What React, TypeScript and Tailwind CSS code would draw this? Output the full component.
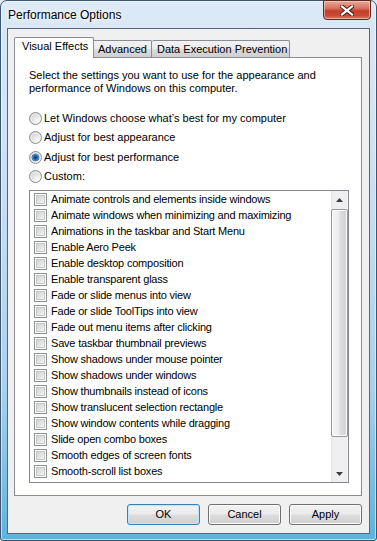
const effects = [
  'Animate controls and elements inside windows',
  'Animate windows when minimizing and maximizing',
  'Animations in the taskbar and Start Menu',
  'Enable Aero Peek',
  'Enable desktop composition',
  'Enable transparent glass',
  'Fade or slide menus into view',
  'Fade or slide ToolTips into view',
  'Fade out menu items after clicking',
  'Save taskbar thumbnail previews',
  'Show shadows under mouse pointer',
  'Show shadows under windows',
  'Show thumbnails instead of icons',
  'Show translucent selection rectangle',
  'Show window contents while dragging',
  'Slide open combo boxes',
  'Smooth edges of screen fonts',
  'Smooth-scroll list boxes',
];

const radios = [
  { label: 'Let Windows choose what\u2019s best for my computer', h: 'h-[20px]' },
  { label: 'Adjust for best appearance', h: 'h-[19px]' },
  { label: 'Adjust for best performance', h: 'h-[20px]', checked: true },
  { label: 'Custom:', h: 'h-[19px]' },
];

function Radio({ checked = false }: { checked?: boolean }) {
  return (
    <svg width="13" height="13" viewBox="0 0 13 13" className="shrink-0">
      <defs>
        <radialGradient id="rg-off" cx="0.65" cy="0.7" r="0.7">
          <stop offset="0" stopColor="#fbfbfb" />
          <stop offset="1" stopColor="#cfd0d1" />
        </radialGradient>
        <radialGradient id="rg-on" cx="0.5" cy="0.5" r="0.5">
          <stop offset="0" stopColor="#0a3566" />
          <stop offset="0.55" stopColor="#1c64b0" />
          <stop offset="1" stopColor="#74b8ec" />
        </radialGradient>
      </defs>
      <circle cx="6.5" cy="6.5" r="6" fill="url(#rg-off)" stroke="#8c8e91" />
      <circle cx="6.5" cy="6.5" r="4.6" fill="none" stroke="#ffffff" strokeOpacity="0.6" />
      {checked && <circle cx="6.5" cy="6.5" r="3.6" fill="url(#rg-on)" stroke="#27578c" strokeWidth="0.6" />}
    </svg>
  );
}

function CheckBox() {
  return (
    <svg width="13" height="13" viewBox="0 0 13 13" className="shrink-0">
      <defs>
        <linearGradient id="cb-in" x1="0" y1="0" x2="1" y2="1">
          <stop offset="0" stopColor="#cdd0d4" />
          <stop offset="1" stopColor="#f6f6f6" />
        </linearGradient>
      </defs>
      <rect x="0.5" y="0.5" width="12" height="12" fill="#ffffff" stroke="#8e8f8f" />
      <rect x="2.5" y="2.5" width="8" height="8" fill="url(#cb-in)" stroke="#b9bcc0" strokeWidth="0.8" />
    </svg>
  );
}

function Arrow({ up }: { up?: boolean }) {
  return (
    <svg width="7" height="4" viewBox="0 0 7 4">
      <path d={up ? 'M0 4 L3.5 0 L7 4 Z' : 'M0 0 L3.5 4 L7 0 Z'} fill="#3d3d3d" />
    </svg>
  );
}

function Button({ label, primary = false }: { label: string; primary?: boolean }) {
  return (
    <button
      className={
        primary
          ? 'flex h-[21px] w-[73px] items-center justify-center rounded-[3px] border border-[#3c7fb1] bg-[linear-gradient(180deg,#f2f2f2_0%,#ebebeb_48%,#dddddd_52%,#cfcfcf_100%)] pb-px text-[11px] text-black shadow-[inset_0_0_0_1px_#c4e5f6]'
          : 'flex h-[21px] w-[73px] items-center justify-center rounded-[3px] border border-[#707070] bg-[linear-gradient(180deg,#f2f2f2_0%,#ebebeb_48%,#dddddd_52%,#cfcfcf_100%)] pb-px text-[11px] text-black shadow-[inset_0_0_0_1px_#fcfcfc]'
      }
    >
      {label}
    </button>
  );
}

export default function App() {
  return (
    <div className="h-[541px] w-[377px] overflow-hidden bg-[#dde9f5] font-['Liberation_Sans',Arial,sans-serif]">
      <div className="relative flex h-[541px] w-[377px] flex-col rounded-t-[7px] rounded-b-[3px] border border-[#3a5670] bg-[linear-gradient(180deg,#dce9f6_0%,#cde0f3_30%,#a9d0ec_72%,#5db3de_100%)] shadow-[inset_0_0_0_1px_rgba(255,255,255,0.55)]">
        {/* title bar */}
        <div className="flex h-[27px] shrink-0 items-start pl-[7px] pt-[7px]">
          <span className="text-[12px] leading-[14px] text-black [text-shadow:0_0_8px_#ffffff,0_0_4px_#ffffff]">
            Performance Options
          </span>
        </div>
        <button className="absolute right-[5px] top-[-1px] flex h-[20px] w-[48px] items-center justify-center rounded-b-[4px] border border-[#5a2a22] bg-[linear-gradient(180deg,#e9a999_0%,#d9735e_40%,#c4402a_55%,#c94a33_80%,#dd7b63_100%)] shadow-[inset_0_0_0_1px_rgba(255,220,210,0.55)]">
          <svg width="14" height="11" viewBox="0 0 14 11">
            <path d="M2 1.5 L12 9.5 M12 1.5 L2 9.5" stroke="#4a2420" strokeWidth="4.2" strokeLinecap="square" />
            <path d="M2 1.5 L12 9.5 M12 1.5 L2 9.5" stroke="#ffffff" strokeWidth="2.2" strokeLinecap="square" />
          </svg>
        </button>

        {/* client area */}
        <div className="mx-[6px] mb-[6px] flex flex-1 flex-col border border-[#55687a] bg-[#f0f0f0] pb-[8px] pl-[6px] pr-[7px] pt-[8px] text-[11px] text-black">
          {/* tabs */}
          <div className="flex h-[20px] shrink-0 items-end">
            <div className="relative z-10 -mb-px h-[21px] w-[80px] rounded-t-[2px] border border-b-0 border-[#898c95] bg-white pl-[7px] pt-[2px] leading-[13px]">
              Visual Effects
            </div>
            <div className="h-[17px] w-[58px] rounded-tr-[2px] border-r border-t border-[#898c95] bg-[linear-gradient(180deg,#f2f2f2_0%,#ebebeb_50%,#dcdcdc_51%,#cfcfcf_100%)] pl-[4px] pt-[2px] leading-[13px]">
              Advanced
            </div>
            <div className="h-[17px] w-[138px] rounded-t-[2px] border-r border-t border-[#898c95] bg-[linear-gradient(180deg,#f2f2f2_0%,#ebebeb_50%,#dcdcdc_51%,#cfcfcf_100%)] pl-[5px] pt-[2px] leading-[13px]">
              Data Execution Prevention
            </div>
          </div>

          {/* tab page */}
          <div className="flex flex-1 flex-col border border-[#898c95] bg-white pl-[14px] pt-[11px]">
            <p className="leading-[13px]">
              Select the settings you want to use for the appearance and
              <br />
              performance of Windows on this computer.
            </p>

            <div className="mt-[13px] flex flex-col">
              {radios.map((r) => (
                <div key={r.label} className={`flex items-center gap-[1px] leading-[13px] ${r.h}`}>
                  <Radio checked={r.checked} />
                  <span className="pl-[1px]">{r.label}</span>
                </div>
              ))}
            </div>

            {/* list */}
            <div className="mt-[4px] flex h-[293px] w-[320px] border border-[#828790] bg-white">
              <div className="flex flex-1 flex-col">
                {effects.map((e) => (
                  <div key={e} className="flex h-[16px] items-center gap-[4px] pl-[4px] leading-[16px] tracking-[-0.2px]">
                    <CheckBox />
                    <span>{e}</span>
                  </div>
                ))}
              </div>
              <div className="flex w-[17px] flex-col border-x border-l-[#e4e4e4] border-r-[#f7f7f7] bg-[#efefef]">
                <div className="flex h-[17px] shrink-0 items-center justify-center">
                  <Arrow up />
                </div>
                <div className="ml-[-1px] mr-[-1px] mt-[1px] h-[228px] shrink-0 rounded-[2px] border border-[#979797] bg-[linear-gradient(90deg,#f6f6f6_0%,#ececec_45%,#dcdcdc_55%,#d2d2d2_100%)] shadow-[inset_0_0_0_1px_#fbfbfb]" />
                <div className="flex-1" />
                <div className="flex h-[17px] shrink-0 items-center justify-center">
                  <Arrow />
                </div>
              </div>
            </div>
          </div>

          {/* buttons */}
          <div className="mt-[8px] flex shrink-0 justify-end gap-[8px]">
            <Button label="OK" primary />
            <Button label="Cancel" />
            <Button label="Apply" />
          </div>
        </div>
      </div>
    </div>
  );
}
